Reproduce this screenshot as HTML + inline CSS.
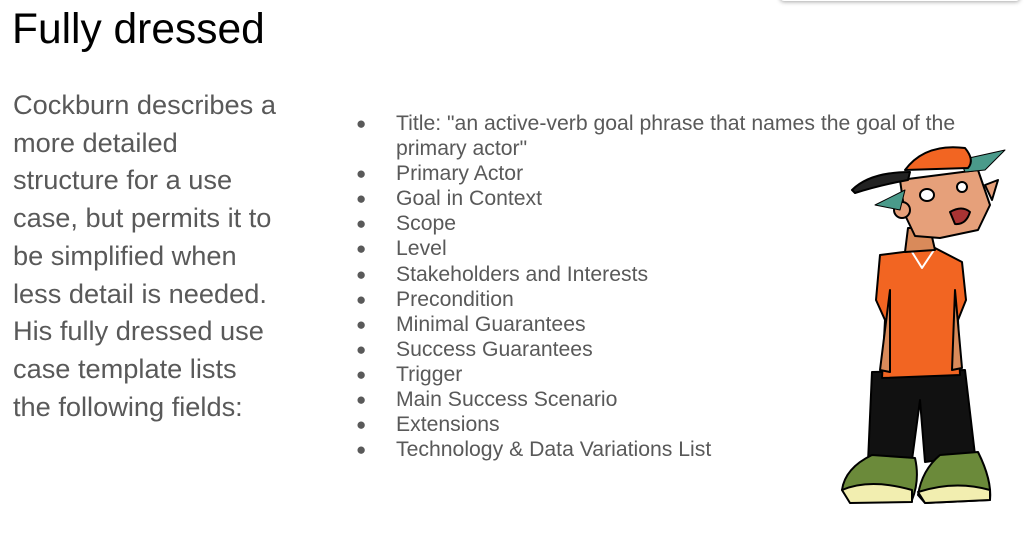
<!DOCTYPE html>
<html><head><style>
body{margin:0;width:1026px;height:538px;background:#fff;overflow:hidden;position:relative;font-family:"Liberation Sans",Arial,sans-serif;}
h1{position:absolute;left:12px;top:6px;margin:0;font-weight:normal;font-size:42.5px;color:#000;}
.p{position:absolute;left:13px;top:86px;width:320px;font-size:27.2px;line-height:37.7px;color:#595959;white-space:nowrap;}
ul{position:absolute;left:356px;top:111px;margin:0;padding:0;list-style:none;font-size:21.2px;line-height:25.1px;color:#595959;width:640px;}
li{position:relative;padding-left:40px;}
li:before{content:"●";position:absolute;left:0;font-size:17px;top:0px;}
.bar{position:absolute;left:780px;top:-10px;width:240px;height:11px;background:#fff;border-radius:0 0 4px 4px;box-shadow:0 1px 4px rgba(0,0,0,.35);}
</style></head><body>
<div class="bar"></div>
<h1>Fully dressed</h1>
<div class="p">Cockburn describes a<br>more detailed<br>structure for a use<br>case, but permits it to<br>be simplified when<br>less detail is needed.<br>His fully dressed use<br>case template lists<br>the following fields:</div>
<ul>
<li>Title: "an active-verb goal phrase that names the goal of the<br>primary actor"</li>
<li>Primary Actor</li><li>Goal in Context</li><li>Scope</li><li>Level</li><li>Stakeholders and Interests</li><li>Precondition</li><li>Minimal Guarantees</li><li>Success Guarantees</li><li>Trigger</li><li>Main Success Scenario</li><li>Extensions</li><li>Technology &amp; Data Variations List</li>
</ul>
<svg style="position:absolute;left:0;top:0" width="1026" height="538">
<g stroke="#000" stroke-width="2" stroke-linejoin="round">
<path d="M872 372 L965 370 L975 455 L925 462 L920 400 L912 460 L868 462 Z" fill="#111"/>
<path d="M880 255 L935 248 L962 262 L966 300 L958 320 L960 375 L882 378 L885 320 L876 300 Z" fill="#f26522"/>
<path d="M890 290 L880 370 L890 372 Z M955 290 L962 368 L952 370 Z" fill="#d98a5a"/>
<path d="M912 252 L922 268 L934 250" fill="none" stroke="#fff" stroke-width="2"/>
<path d="M908 228 L905 252 L935 250 L930 228 Z" fill="#d98a5a"/>
<path d="M900 180 L978 170 L990 205 L978 230 L940 238 L915 236 L905 215 Z" fill="#e6a07a"/>
<circle cx="902" cy="210" r="8" fill="#e6a07a"/>
<path d="M985 185 L998 180 L992 200 Z" fill="#e6a07a"/>
<ellipse cx="927" cy="195" rx="7" ry="6" fill="#fff"/>
<ellipse cx="962" cy="187" rx="5" ry="5" fill="#fff"/>
<path d="M950 212 Q962 205 970 212 Q966 225 955 224 Z" fill="#a33"/>
<path d="M875 205 L905 190 L900 210 Z M960 160 L1005 150 L985 170 L965 172 Z" fill="#4a9a8a" stroke-width="1"/>
<path d="M905 170 Q925 143 965 148 Q975 160 968 168 Z" fill="#f26522"/>
<path d="M852 190 Q870 172 910 172 L908 180 Q880 185 855 193 Z" fill="#222"/>
<path d="M842 490 Q845 468 872 455 L915 458 Q920 480 912 500 L850 502 Z" fill="#6b8a3a"/>
<path d="M842 490 Q870 478 912 490 L912 502 L850 503 Z" fill="#f2eeb0"/>
<path d="M918 495 Q922 470 940 455 L978 452 Q992 480 990 500 L925 503 Z" fill="#6b8a3a"/>
<path d="M918 492 Q955 480 990 490 L990 500 L925 503 Z" fill="#f2eeb0"/>
</g>
</svg>
</body></html>
